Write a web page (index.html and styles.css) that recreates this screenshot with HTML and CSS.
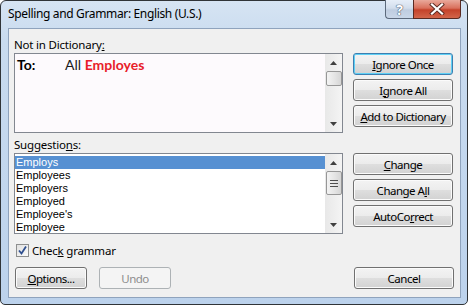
FILE: index.html
```html
<!DOCTYPE html>
<html>
<head>
<meta charset="utf-8">
<link rel="stylesheet" href="styles.css">
</head>
<body>
<div class="window">
  <div class="titlebar">
    <span class="title">Spelling and Grammar: English (U.S.)</span>
    <div class="caption-buttons">
      <div class="cap-btn help"><span>?</span></div>
      <div class="cap-btn close">
        <svg width="16" height="12" viewBox="0 0 16 12">
          <path d="M3 1.5 L13 10.5 M13 1.5 L3 10.5" stroke="#5a2a22" stroke-width="4" stroke-linecap="square" fill="none"/>
          <path d="M3 1.5 L13 10.5 M13 1.5 L3 10.5" stroke="#ffffff" stroke-width="2.2" stroke-linecap="square" fill="none"/>
        </svg>
      </div>
    </div>
  </div>
  <div class="panel">
    <div class="label">Not in Dictionary<u>:</u></div>
    <div class="row">
      <div class="box box-top">
        <div class="box-content">
          <div class="sentence"><b class="to">To:</b><span class="all">All </span><b class="bad">Employes</b></div>
        </div>
        <div class="scrollbar">
          <div class="arrow"><svg width="7" height="4" viewBox="0 0 7 4"><path d="M0 4 L3.5 0 L7 4 Z" fill="#404040"/></svg></div>
          <div class="thumb"></div>
          <div class="track"></div>
          <div class="arrow"><svg width="7" height="4" viewBox="0 0 7 4"><path d="M0 0 L3.5 4 L7 0 Z" fill="#404040"/></svg></div>
        </div>
      </div>
      <div class="btn-col">
        <div class="btn default"><span><u>I</u>gnore Once</span></div>
        <div class="btn"><span>I<u>g</u>nore All</span></div>
        <div class="btn"><span><u>A</u>dd to Dictionary</span></div>
      </div>
    </div>

    <div class="label label-sugg">Suggestio<u>n</u>s:</div>
    <div class="row">
      <div class="box box-list">
        <div class="list">
          <div class="item selected">Employs</div>
          <div class="item">Employees</div>
          <div class="item">Employers</div>
          <div class="item">Employed</div>
          <div class="item">Employee's</div>
          <div class="item">Employee</div>
        </div>
        <div class="scrollbar">
          <div class="arrow"><svg width="7" height="4" viewBox="0 0 7 4"><path d="M0 4 L3.5 0 L7 4 Z" fill="#404040"/></svg></div>
          <div class="thumb thumb-grip">
            <svg width="8" height="7" viewBox="0 0 8 7"><path d="M0 0.5 H8 M0 3.5 H8 M0 6.5 H8" stroke="#4d4d4d" stroke-width="1"/></svg>
          </div>
          <div class="track"></div>
          <div class="arrow"><svg width="7" height="4" viewBox="0 0 7 4"><path d="M0 0 L3.5 4 L7 0 Z" fill="#404040"/></svg></div>
        </div>
      </div>
      <div class="btn-col">
        <div class="btn"><span><u>C</u>hange</span></div>
        <div class="btn"><span>Change A<u>l</u>l</span></div>
        <div class="btn"><span>AutoCo<u>r</u>rect</span></div>
      </div>
    </div>

    <div class="check-row">
      <div class="checkbox">
        <svg width="11" height="11" viewBox="0 0 11 11"><path d="M2 5.5 L4.5 8.5 L9 1.5" stroke="#2f4f8f" stroke-width="1.8" fill="none"/></svg>
      </div>
      <span>Chec<u>k</u> grammar</span>
    </div>

    <div class="bottom-row">
      <div class="btn small"><span><u>O</u>ptions...</span></div>
      <div class="btn small disabled"><span>Undo</span></div>
      <div class="spacer"></div>
      <div class="btn"><span>Cancel</span></div>
    </div>
  </div>
</div>
</body>
</html>
```

FILE: styles.css
```css
html, body {
  margin: 0;
  padding: 0;
  background: #ffffff;
}

body {
  font-family: "Noto Sans", "Open Sans", sans-serif;
  font-size: 11.5px;
  letter-spacing: -0.2px;
  color: #000;
}

.window {
  box-sizing: border-box;
  width: 468px;
  height: 305px;
  border: 1px solid #303438;
  border-radius: 6px 6px 5px 5px;
  background: linear-gradient(to bottom, #d6e4f3 0px, #c9dbef 40px, #bcd2ec 100%);
  padding: 0 6px 6px 7px;
  display: flex;
  flex-direction: column;
}

.titlebar {
  height: 27px;
  display: flex;
  align-items: flex-start;
  flex-shrink: 0;
}

.title {
  font-size: 12px;
  line-height: 14px;
  margin-top: 6px;
  letter-spacing: -0.35px;
  color: #000;
}

.caption-buttons {
  margin-left: auto;
  display: flex;
  margin-top: -1px;
}

.cap-btn {
  height: 19px;
  box-sizing: border-box;
  border: 1px solid #5c6a7c;
  border-top: none;
  display: flex;
  align-items: center;
  justify-content: center;
}

.help {
  width: 28px;
  border-radius: 0 0 0 4px;
  border-right: none;
  background: linear-gradient(to bottom, #e6eef8 0%, #d3deec 45%, #bfcde0 55%, #c9d7e8 100%);
  font-size: 14px;
  font-weight: bold;
  color: #ffffff;
  text-shadow: 0 0 1px #4b5b72, 0 0 1px #4b5b72, 0 0 1px #4b5b72;
}

.close {
  width: 48px;
  border-radius: 0 0 4px 0;
  border-color: #5a2a22;
  background: linear-gradient(to bottom, #e9a99b 0%, #d9705c 45%, #c4422a 55%, #d2654a 100%);
}

.panel {
  flex: 1;
  box-sizing: border-box;
  border: 1px solid #8fa3bd;
  background: #f0f0f0;
  padding: 8px 6px 0 5px;
  display: flex;
  flex-direction: column;
}

.label {
  line-height: 16px;
  height: 16px;
}

.label-sugg {
  margin-top: 4px;
}

.row {
  display: flex;
  gap: 10px;
}

.box {
  box-sizing: border-box;
  width: 329px;
  border: 1px solid #828790;
  background: #fdfafd;
  display: flex;
}

.box-top {
  height: 80px;
}

.box-list {
  height: 81px;
  background: #ffffff;
}

.box-content {
  flex: 1;
  padding: 2px 2px;
}

.sentence {
  font-family: Lato, "Open Sans", sans-serif;
  font-size: 14px;
  letter-spacing: 0;
  line-height: 18px;
  color: #1a1a1a;
}

.to {
  display: inline-block;
  width: 48px;
  color: #000;
}

.bad {
  color: #e8202a;
}

.scrollbar {
  width: 17px;
  flex-shrink: 0;
  background: linear-gradient(to right, #e8e8e8, #f4f4f4);
  display: flex;
  flex-direction: column;
}

.arrow {
  height: 17px;
  display: flex;
  align-items: center;
  justify-content: center;
  flex-shrink: 0;
}

.thumb {
  box-sizing: border-box;
  height: 15px;
  margin: 0 0 0 1px;
  border: 1px solid #979797;
  border-radius: 2px;
  background: linear-gradient(to right, #f3f3f3, #e6e6e6 50%, #d6d6d6);
  flex-shrink: 0;
}

.thumb-grip {
  height: 24px;
  display: flex;
  align-items: center;
  justify-content: center;
}

.track {
  flex: 1;
}

.list {
  flex: 1;
  padding: 2px 0 0 0;
  overflow: hidden;
}

.item {
  height: 13px;
  line-height: 13px;
  font-family: "Liberation Sans", Arial, sans-serif;
  font-size: 11px;
  padding-left: 1px;
  letter-spacing: 0;
}

.item.selected {
  background: #5690d2;
  color: #ffffff;
}

.btn-col {
  display: flex;
  flex-direction: column;
  gap: 4px;
}

.btn {
  box-sizing: border-box;
  width: 100px;
  height: 22px;
  border: 1px solid #707070;
  border-radius: 3px;
  background: linear-gradient(to bottom, #f3f3f3 0%, #ececec 48%, #dedede 52%, #d2d2d2 100%);
  box-shadow: inset 0 0 0 1px #fbfbfb;
  display: flex;
  align-items: center;
  justify-content: center;
  font-size: 11.5px;
  letter-spacing: -0.5px;
  color: #000;
  white-space: nowrap;
}

.btn.default {
  border-color: #3c7fb1;
  box-shadow: inset 0 0 0 1px #5fd0f5;
}

.btn.small {
  width: 72px;
}

.btn.disabled {
  border-color: #adb2b5;
  background: #f4f4f4;
  box-shadow: none;
  color: #8d8d8d;
}

.check-row {
  margin-top: 8px;
  height: 16px;
  display: flex;
  align-items: center;
  gap: 3px;
  padding-left: 2px;
}

.checkbox {
  box-sizing: border-box;
  width: 13px;
  height: 13px;
  border: 1px solid #8e8f8f;
  background: linear-gradient(135deg, #e0e0e0, #fbfbfb);
  display: flex;
  align-items: center;
  justify-content: center;
}

.bottom-row {
  margin-top: 9px;
  display: flex;
  gap: 12px;
  padding-left: 1px;
}

.spacer {
  flex: 1;
}
```
